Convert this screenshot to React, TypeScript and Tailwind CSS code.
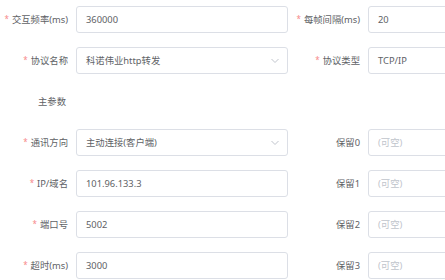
import React from "react";

const Chevron = () => (
  <svg width="8" height="5" viewBox="0 0 8 5" className="absolute right-[8px] top-1/2 -translate-y-1/2">
    <path d="M0.5 0.5 L4 4 L7.5 0.5" fill="none" stroke="#c0c4cc" strokeWidth="1" />
  </svg>
);

function Label({ text, req, w }: { text: string; req?: boolean; w: string }) {
  return (
    <div className={`${w} shrink-0 flex items-center justify-end pr-[8px] text-[#606266]`}>
      {req && <span className="text-[#f78989] text-[8px] mr-[3px] -mt-[1px]">*</span>}
      <span>{text}</span>
    </div>
  );
}

function Input({ value, placeholder, select, w }: { value?: string; placeholder?: string; select?: boolean; w: string }) {
  return (
    <div className={`${w} shrink-0 relative h-[27px] border border-[#dcdfe6] rounded-[3px] bg-white flex items-center pl-[9px]`}>
      {value ? (
        <span className="text-[#606266]">{value}</span>
      ) : (
        <span className="text-[#c0c4cc]">{placeholder}</span>
      )}
      {select && <Chevron />}
    </div>
  );
}

type Cell = { label: string; req?: boolean; value?: string; placeholder?: string; select?: boolean };

function Row({ left, right }: { left: Cell; right: Cell }) {
  return (
    <div className="flex h-[27px]">
      <Label text={left.label} req={left.req} w="w-[76px]" />
      <Input value={left.value} placeholder={left.placeholder} select={left.select} w="w-[212px]" />
      <Label text={right.label} req={right.req} w="w-[80px]" />
      <Input value={right.value} placeholder={right.placeholder} select={right.select} w="w-[212px]" />
    </div>
  );
}

export default function App() {
  return (
    <div
      className="w-[445px] h-[280px] overflow-hidden bg-white text-[9.33px] pt-[6px] flex flex-col gap-[14px]"
      style={{ fontFamily: '"Noto Sans", "Noto Sans CJK SC", sans-serif' }}
    >
      <Row
        left={{ label: "交互频率(ms)", req: true, value: "360000" }}
        right={{ label: "每帧间隔(ms)", req: true, value: "20" }}
      />
      <Row
        left={{ label: "协议名称", req: true, value: "科诺伟业http转发", select: true }}
        right={{ label: "协议类型", req: true, value: "TCP/IP" }}
      />
      <div className="flex h-[27px]">
        <div className="w-[76px] flex items-center justify-end pr-[10px] text-[#606266]">主参数</div>
      </div>
      <Row
        left={{ label: "通讯方向", req: true, value: "主动连接(客户端)", select: true }}
        right={{ label: "保留0", placeholder: "(可空)" }}
      />
      <Row
        left={{ label: "IP/域名", req: true, value: "101.96.133.3" }}
        right={{ label: "保留1", placeholder: "(可空)" }}
      />
      <Row
        left={{ label: "端口号", req: true, value: "5002" }}
        right={{ label: "保留2", placeholder: "(可空)" }}
      />
      <Row
        left={{ label: "超时(ms)", req: true, value: "3000" }}
        right={{ label: "保留3", placeholder: "(可空)" }}
      />
    </div>
  );
}
